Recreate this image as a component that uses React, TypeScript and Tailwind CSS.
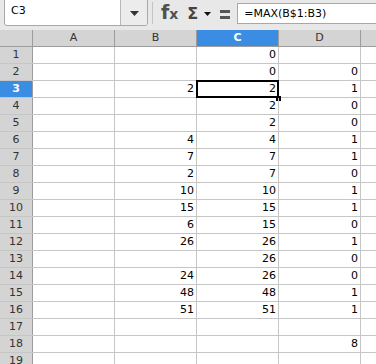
import React from "react";

const rows: (string | number)[][] = [
  ["", "", 0, ""],
  ["", "", 0, 0],
  ["", 2, 2, 1],
  ["", "", 2, 0],
  ["", "", 2, 0],
  ["", 4, 4, 1],
  ["", 7, 7, 1],
  ["", 2, 7, 0],
  ["", 10, 10, 1],
  ["", 15, 15, 1],
  ["", 6, 15, 0],
  ["", 26, 26, 1],
  ["", "", 26, 0],
  ["", 24, 26, 0],
  ["", 48, 48, 1],
  ["", 51, 51, 1],
  ["", "", "", ""],
  ["", "", "", 8],
  ["", "", "", ""],
];

const font = { fontFamily: '"DejaVu Sans", sans-serif' };

export default function App() {
  return (
    <div className="w-[376px] h-[364px] overflow-hidden bg-white text-[11px] text-black" style={font}>
      {/* toolbar */}
      <div className="h-[30px] bg-[#e8e8e8] flex items-start relative">
        <div className="ml-[4px] mt-[-4px] h-[30px] w-[144px] flex border border-[#a8a8a8] rounded-b-[3px] bg-white overflow-hidden">
          <div className="flex-1 pl-[6px] pt-[6px] leading-[16px] text-[11px]">C3</div>
          <div className="w-[27px] border-l border-[#b8b8b8] bg-[#ececec] flex items-center justify-center pt-[4px]">
            <svg width="9" height="5" viewBox="0 0 9 5"><path d="M0 0H9L4.5 5Z" fill="#333" /></svg>
          </div>
        </div>
        <div className="ml-[4px] mt-[2px] w-px h-[22px] bg-[#c4c4c4]" />
        <div className="ml-[8px] mt-[3px] flex items-end text-[#505050] font-bold leading-none" style={{ fontFamily: '"DejaVu Sans", sans-serif' }}>
          <span className="text-[19px] italic-none">f</span>
          <span className="text-[14px] mb-[1px]">x</span>
        </div>
        <div className="ml-[9px] mt-[6px] text-[16px] font-bold text-[#444] leading-none">Σ</div>
        <div className="ml-[6px] mt-[12px]">
          <svg width="7" height="4" viewBox="0 0 7 4"><path d="M0 0H7L3.5 4Z" fill="#111" /></svg>
        </div>
        <div className="ml-[9px] mt-[10px] flex flex-col gap-[3px]">
          <div className="w-[10px] h-[3px] bg-[#555]" />
          <div className="w-[10px] h-[3px] bg-[#555]" />
        </div>
        <div className="ml-[7px] mt-[3px] h-[21px] flex-1 bg-white border border-[#a8a8a8] border-r-0 pl-[6px] leading-[19px] text-[11px]">
          =MAX(B$1:B3)
        </div>
      </div>

      {/* column header */}
      <div className="h-[17px] flex bg-[#d4d4d4] border-b border-[#9c9c9c] text-[11px] text-[#333]">
        <div className="w-[33px] shrink-0 border-r border-[#9c9c9c]" />
        <div className="w-[82px] shrink-0 border-r border-[#9c9c9c] flex items-center justify-center">A</div>
        <div className="w-[82px] shrink-0 border-r border-[#9c9c9c] flex items-center justify-center">B</div>
        <div className="w-[82px] shrink-0 border-r border-[#9c9c9c] flex items-center justify-center bg-[#3b8de3] text-white font-bold">C</div>
        <div className="w-[82px] shrink-0 border-r border-[#9c9c9c] flex items-center justify-center">D</div>
        <div className="flex-1" />
      </div>

      {rows.map((r, i) => {
        const sel = i === 2;
        return (
          <div key={i} className="h-[17px] flex border-b border-[#c6c6c6]">
            <div
              className={
                "w-[33px] shrink-0 border-r border-[#9c9c9c] flex items-center justify-center text-[11px] " +
                (sel ? "bg-[#3b8de3] text-white font-bold" : "bg-[#d4d4d4] text-[#333]")
              }
            >
              {i + 1}
            </div>
            {r.map((v, j) => (
              <div
                key={j}
                className="w-[82px] shrink-0 border-r border-[#c6c6c6] flex items-center justify-end pr-[2px] relative"
              >
                {v}
                {sel && j === 2 && (
                  <>
                    <div className="absolute left-[-1px] top-[-1px] right-[-1px] bottom-[-1px] border-2 border-black" />
                    <div className="absolute right-[-3px] bottom-[-4px] w-[5px] h-[5px] bg-black" />
                  </>
                )}
              </div>
            ))}
            <div className="flex-1" />
          </div>
        );
      })}
    </div>
  );
}
